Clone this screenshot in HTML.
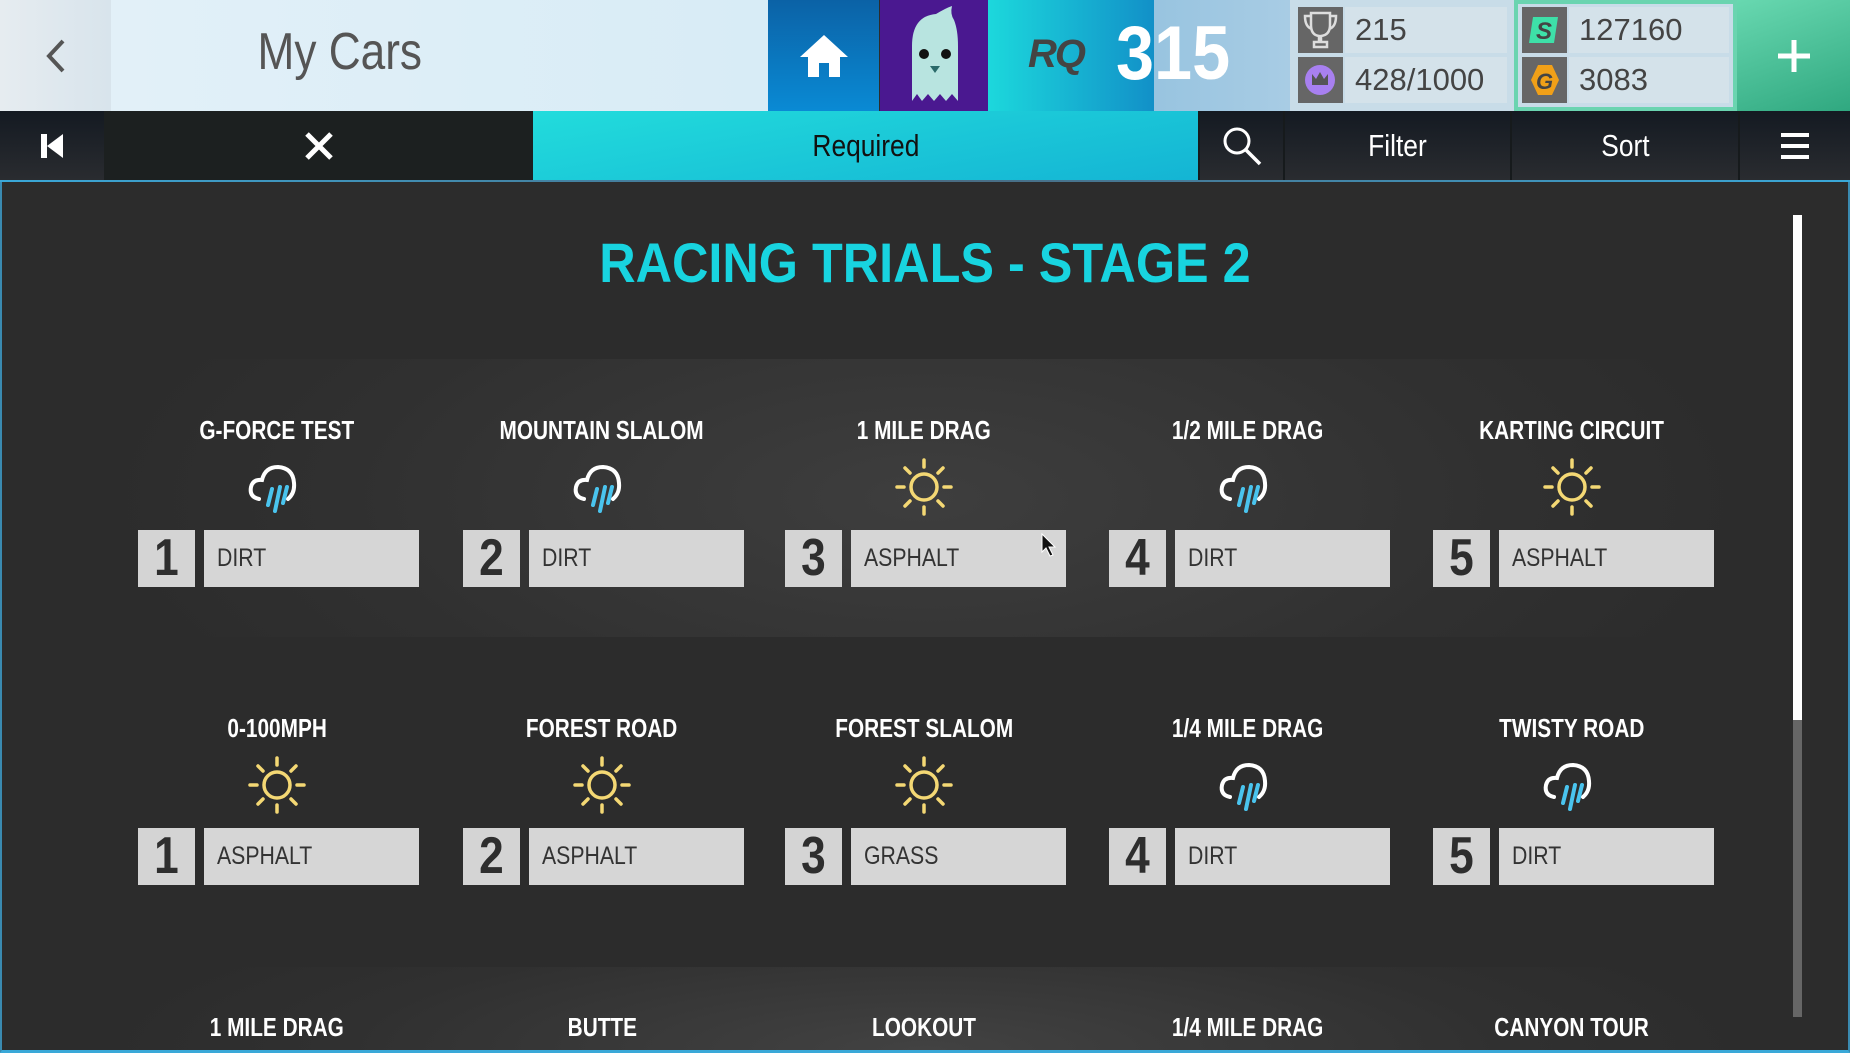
<!DOCTYPE html>
<html><head><meta charset="utf-8"><style>
*{margin:0;padding:0;box-sizing:border-box}
body{width:1850px;height:1053px;overflow:hidden;background:#2c2c2c;font-family:"Liberation Sans Narrow","Liberation Sans",sans-serif;position:relative}
.a{position:absolute}
.c{display:flex;align-items:center;justify-content:center}
.cond{display:inline-block;transform:scaleX(.85)}
.ev{position:absolute;width:324px;text-align:center;color:#fff;font-weight:bold;font-size:26px}
.ev .cond{transform:scaleX(.8)}
.num{position:absolute;width:57px;height:57px;background:#d4d4d4;color:#2e2e2e;font-weight:bold;font-size:52px;text-align:center;line-height:57px;font-family:"Liberation Sans",sans-serif}
.lab{position:absolute;width:215px;height:57px;background:#d6d6d6;color:#333;font-size:25px;line-height:57px;padding-left:13px;font-family:"Liberation Sans",sans-serif}
.stat{position:absolute;height:46px;background:#d4e2ea;color:#444;font-size:31px;line-height:46px;padding-left:10px;font-family:"Liberation Sans",sans-serif}
.ico{position:absolute;width:45px;height:46px;background:#666}
.tab{position:absolute;top:111px;height:70px;color:#fff;font-size:31px;font-family:"Liberation Sans",sans-serif;border-left:2px solid #161a1c}
</style></head><body>
<div class="a c" style="left:0;top:0;width:111px;height:111px;background:linear-gradient(90deg,#e6ecf0,#d8e4ec)">
<svg width="30" height="40" viewBox="0 0 30 40"><path d="M22 5 L8 20 L22 35" stroke="#555" stroke-width="4" fill="none"/></svg></div>
<div class="a" style="left:111px;top:0;width:657px;height:111px;background:linear-gradient(90deg,#e2f0f8,#d8ecf6)"></div>
<div class="a" style="left:230px;top:22px;width:220px;text-align:center;color:#555;font-size:52px;font-family:'Liberation Sans',sans-serif"><span class="cond">My Cars</span></div>
<div class="a c" style="left:768px;top:0;width:111px;height:111px;background:linear-gradient(180deg,#0b62a6,#0a8ad4)">
<svg width="52" height="46" viewBox="0 0 52 46"><path d="M26 2 L50 24 L42 24 L42 44 L31 44 L31 30 L21 30 L21 44 L10 44 L10 24 L2 24 Z" fill="#fff"/></svg></div>
<div class="a c" style="left:880px;top:0;width:108px;height:111px;background:#4a1890">
<svg width="80" height="100" viewBox="0 0 80 100"><path d="M18 95 L18 40 Q18 10 42 8 Q52 2 58 0 Q56 8 60 14 Q64 24 64 40 L64 95 L58 88 L52 95 L46 88 L40 95 L34 88 L28 95 L23 88 Z" fill="#b8e4e0"/><circle cx="30" cy="48" r="5" fill="#111"/><circle cx="52" cy="48" r="5" fill="#111"/><path d="M36 60 h10 l-5 7z" fill="#2a6a6a"/></svg></div>
<div class="a" style="left:988px;top:0;width:166px;height:111px;background:linear-gradient(90deg,#1cd8dc,#1290c8)"></div>
<div class="a" style="left:1154px;top:0;width:136px;height:111px;background:linear-gradient(90deg,#98c4e0,#a8cce4)"></div>
<div class="a" style="left:1028px;top:32px;color:#444;font-size:40px;font-style:italic;font-weight:900;font-family:'Liberation Sans',sans-serif;letter-spacing:-2px">RQ</div>
<div class="a" style="left:1116px;top:10px;color:#fff;font-size:76px;font-weight:bold;font-family:'Liberation Sans',sans-serif"><span class="cond" style="transform-origin:left;transform:scaleX(.9)">315</span></div>
<div class="a" style="left:1290px;top:0;width:224px;height:111px;background:#c8dce8"></div>
<div class="ico" style="left:1298px;top:7px"><svg width="45" height="46" viewBox="0 0 45 46"><path d="M13 6 H32 V18 Q32 28 23 29 V35 H29 V40 H16 V35 H21 V29 Q13 28 13 18Z M13 9 H7 Q7 20 14 22 M32 9 H38 Q38 20 31 22" fill="none" stroke="#ddd" stroke-width="2.5"/></svg></div>
<div class="stat" style="left:1345px;top:7px;width:162px">215</div>
<div class="ico" style="left:1298px;top:57px"><svg width="45" height="46"><circle cx="22" cy="23" r="15" fill="#a880f0"/><path d="M14 28 V17 L18 22 L22 15 L26 22 L30 17 V28Z" fill="#555"/></svg></div>
<div class="stat" style="left:1345px;top:57px;width:162px">428/1000</div>
<div class="a" style="left:1514px;top:0;width:223px;height:111px;background:#c8dce8;border:4px solid #6ad4b0"></div>
<div class="ico" style="left:1522px;top:7px"><svg width="45" height="46"><path d="M11 10 H36 L32 36 H7Z" fill="#3ee0a8"/><text x="14" y="32" font-size="24" font-weight="bold" fill="#444" font-family="Liberation Sans" font-style="italic">S</text></svg></div>
<div class="stat" style="left:1569px;top:7px;width:160px">127160</div>
<div class="ico" style="left:1522px;top:57px"><svg width="45" height="46"><path d="M16 8 H30 L37 23 L30 38 H16 L9 23Z" fill="#f0a018"/><text x="14" y="32" font-size="22" font-weight="bold" fill="#444" font-family="Liberation Sans" font-style="italic">G</text></svg></div>
<div class="stat" style="left:1569px;top:57px;width:160px">3083</div>
<div class="a c" style="left:1737px;top:0;width:113px;height:111px;background:linear-gradient(160deg,#68d8b0,#30a880)">
<svg width="36" height="36"><path d="M18 2V34M2 18H34" stroke="#fff" stroke-width="5"/></svg></div>
<div class="a" style="left:0;top:111px;width:1850px;height:70px;background:linear-gradient(180deg,#141a22,#2a2c30)"></div>
<div class="a c" style="left:0;top:111px;width:104px;height:70px">
<svg width="26" height="28"><rect x="2" y="2" width="6" height="24" fill="#fff"/><path d="M24 2V26L8 14Z" fill="#fff"/></svg></div>
<div class="a c" style="left:104px;top:111px;width:429px;height:70px;background:#1c2020">
<svg width="32" height="32"><path d="M4 4L28 28M28 4L4 28" stroke="#fff" stroke-width="5"/></svg></div>
<div class="a c" style="left:533px;top:111px;width:665px;height:70px;background:linear-gradient(170deg,#22dcdc,#14b4d4);color:#111;font-size:31px;font-family:'Liberation Sans',sans-serif"><span class="cond">Required</span></div>
<div class="tab c" style="left:1198px;width:85px"><svg width="44" height="44"><circle cx="17" cy="17" r="12" stroke="#fff" stroke-width="3" fill="none"/><path d="M26 26L40 40" stroke="#fff" stroke-width="3.5"/></svg></div>
<div class="tab c" style="left:1283px;width:227px"><span class="cond">Filter</span></div>
<div class="tab c" style="left:1510px;width:228px"><span class="cond">Sort</span></div>
<div class="tab c" style="left:1738px;width:112px"><svg width="28" height="28"><path d="M0 3H28M0 14H28M0 25H28" stroke="#fff" stroke-width="4"/></svg></div>
<div class="a" style="left:0;top:180px;width:1850px;height:2px;background:linear-gradient(90deg,#3aa8d8,#4a6a80,#3aa8d8)"></div>
<div class="a" style="left:0;top:182px;width:1850px;height:871px;background:#2c2c2c;border-left:2px solid #3a8ab0;border-right:2px solid #3a8ab0;border-bottom:3px solid #3aa8d8"></div>
<div class="a" style="left:2px;top:359px;width:1846px;height:278px;background:radial-gradient(ellipse 45% 120% at 50% 50%,#3e3e3e,#303030 70%,#2c2c2c)"></div>
<div class="a" style="left:2px;top:967px;width:1846px;height:83px;background:radial-gradient(ellipse 45% 200% at 50% 100%,#424242,#303030 70%,#2c2c2c)"></div>
<div class="a" style="left:1793px;top:215px;width:9px;height:505px;background:#fff"></div>
<div class="a" style="left:1793px;top:720px;width:9px;height:297px;background:#666"></div>
<div class="a" style="left:0;top:230px;width:1850px;text-align:center;color:#18d4e0;font-size:56px;font-weight:bold;font-family:'Liberation Sans',sans-serif"><span class="cond" style="transform:scaleX(.9)">RACING TRIALS - STAGE 2</span></div>
<div id="g"></div>
<script>
var R='<svg width="64" height="64" viewBox="0 0 64 64"><path d="M14 44 Q4 42 6 32 Q8 24 17 25 Q20 12 33 12 Q48 13 49 28 Q50 38 43 44" fill="none" stroke="#fff" stroke-width="4" stroke-linecap="round"/><path d="M27 34L23 50M35 32L30 56M42 32L38 48" stroke="#4ac4ee" stroke-width="4" stroke-linecap="round"/></svg>';
var S='<svg width="64" height="64" viewBox="0 0 64 64"><g stroke="#f4d874" stroke-width="3.5" stroke-linecap="round" fill="none"><circle cx="32" cy="32" r="13"/><path d="M32 5V12M32 52V59M5 32H12M52 32H59M13 13L18 18M46 46L51 51M51 13L46 18M18 46L13 51"/></g></svg>';
var cx=[277,602,924,1248,1572];
var rows=[[431,[["G-FORCE TEST",R,"DIRT"],["MOUNTAIN SLALOM",R,"DIRT"],["1 MILE DRAG",S,"ASPHALT"],["1/2 MILE DRAG",R,"DIRT"],["KARTING CIRCUIT",S,"ASPHALT"]]],
[729,[["0-100MPH",S,"ASPHALT"],["FOREST ROAD",S,"ASPHALT"],["FOREST SLALOM",S,"GRASS"],["1/4 MILE DRAG",R,"DIRT"],["TWISTY ROAD",R,"DIRT"]]],
[1028,[["1 MILE DRAG"],["BUTTE"],["LOOKOUT"],["1/4 MILE DRAG"],["CANYON TOUR"]]]];
var h='';
rows.forEach(function(r){var y=r[0];r[1].forEach(function(e,i){var c=cx[i];
h+='<div class="ev" style="left:'+(c-162)+'px;top:'+(y-16)+'px"><span class="cond">'+e[0]+'</span></div>';
if(e[1]){h+='<div class="a" style="left:'+(c-32)+'px;top:'+(y+24)+'px">'+e[1]+'</div>';
h+='<div class="num" style="left:'+(c-139)+'px;top:'+(y+99)+'px"><span class="cond">'+(i+1)+'</span></div>';
h+='<div class="lab" style="left:'+(c-73)+'px;top:'+(y+99)+'px"><span class="cond" style="transform-origin:left">'+e[2]+'</span></div>';}
});});
document.getElementById('g').innerHTML=h;
</script>
<svg class="a" style="left:1040px;top:532px" width="18" height="26"><path d="M2 2V20L6 16L10 24L13 23L9 15H15Z" fill="#111" stroke="#fff" stroke-width="1"/></svg>
</body></html>
